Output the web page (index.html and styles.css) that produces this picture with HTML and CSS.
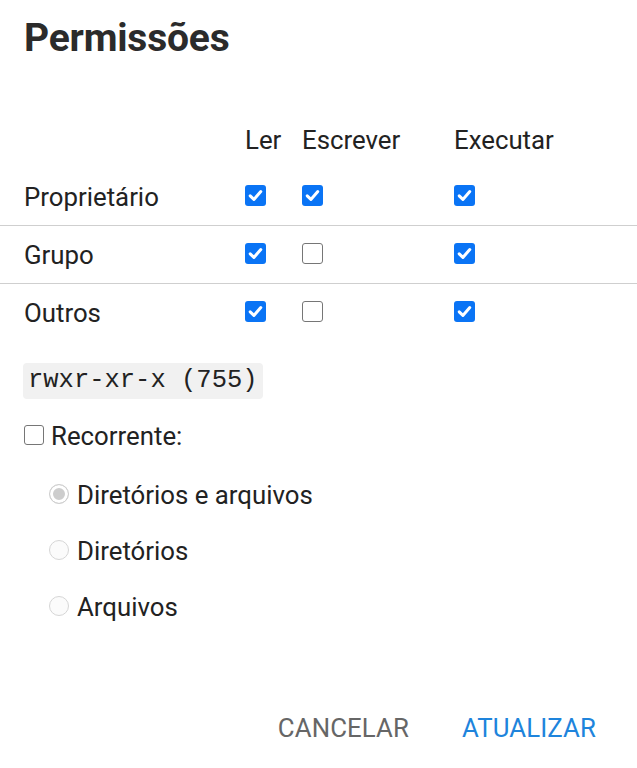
FILE: index.html
```html
<!DOCTYPE html>
<html lang="pt">
<head>
<meta charset="utf-8">
<title>Permissões</title>
<link rel="stylesheet" href="styles.css">
</head>
<body>
<div class="dialog">
  <h1 class="title">Permissões</h1>

  <div class="perm-table">
    <div class="row head">
      <div class="cell label"></div>
      <div class="cell">Ler</div>
      <div class="cell">Escrever</div>
      <div class="cell">Executar</div>
    </div>
    <div class="row body-row">
      <div class="cell label">Proprietário</div>
      <div class="cell"><span class="cb on"><svg viewBox="0 0 21 21"><path d="M5.2 10.8 L8.9 14.4 L15.8 6.6"/></svg></span></div>
      <div class="cell"><span class="cb on"><svg viewBox="0 0 21 21"><path d="M5.2 10.8 L8.9 14.4 L15.8 6.6"/></svg></span></div>
      <div class="cell"><span class="cb on"><svg viewBox="0 0 21 21"><path d="M5.2 10.8 L8.9 14.4 L15.8 6.6"/></svg></span></div>
    </div>
    <div class="row body-row">
      <div class="cell label">Grupo</div>
      <div class="cell"><span class="cb on"><svg viewBox="0 0 21 21"><path d="M5.2 10.8 L8.9 14.4 L15.8 6.6"/></svg></span></div>
      <div class="cell"><span class="cb off"></span></div>
      <div class="cell"><span class="cb on"><svg viewBox="0 0 21 21"><path d="M5.2 10.8 L8.9 14.4 L15.8 6.6"/></svg></span></div>
    </div>
    <div class="row body-row last">
      <div class="cell label">Outros</div>
      <div class="cell"><span class="cb on"><svg viewBox="0 0 21 21"><path d="M5.2 10.8 L8.9 14.4 L15.8 6.6"/></svg></span></div>
      <div class="cell"><span class="cb off"></span></div>
      <div class="cell"><span class="cb on"><svg viewBox="0 0 21 21"><path d="M5.2 10.8 L8.9 14.4 L15.8 6.6"/></svg></span></div>
    </div>
  </div>

  <div class="section">
    <code class="mode">rwxr-xr-x (755)</code>
  </div>

  <div class="section recur">
    <span class="cb off small"></span>
    <span class="recur-label">Recorrente:</span>
  </div>

  <div class="radios">
    <div class="radio-row"><span class="radio checked"></span><span class="radio-label">Diretórios e arquivos</span></div>
    <div class="radio-row"><span class="radio"></span><span class="radio-label">Diretórios</span></div>
    <div class="radio-row"><span class="radio"></span><span class="radio-label">Arquivos</span></div>
  </div>

  <div class="actions">
    <button class="btn cancel" type="button">CANCELAR</button>
    <button class="btn primary" type="button">ATUALIZAR</button>
  </div>
</div>
</body>
</html>
```

FILE: styles.css
```css
html, body {
  margin: 0;
  padding: 0;
  background: #ffffff;
}

body {
  font-family: Roboto, "Liberation Sans", Arial, sans-serif;
  font-size: 25.8px;
  color: #222222;
}

.dialog {
  width: 637px;
}

.title {
  margin: 0;
  padding: 15px 24px 0;
  font-size: 39px;
  line-height: 46px;
  font-weight: 700;
  color: #2b2b2b;
  letter-spacing: -0.2px;
}

.perm-table {
  margin-top: 50px;
}

.row {
  display: grid;
  grid-template-columns: 221px 57px 152px 1fr;
  align-items: center;
  padding-left: 24px;
}

.row.head {
  height: 57px;
}

.row.body-row {
  height: 57px;
  border-bottom: 1px solid #cfcfcf;
}

.row.body-row.last {
  border-bottom: none;
}

.cell {
  line-height: 30px;
  display: flex;
  align-items: center;
}

.head .cell {
  padding-left: 0;
}

.cb {
  box-sizing: border-box;
  display: inline-block;
  width: 21px;
  height: 21px;
  border-radius: 3px;
  margin-top: -3px;
}

.cb.on {
  background: #0a74f5;
}

.cb svg {
  display: block;
  width: 21px;
  height: 21px;
}

.cb svg path {
  fill: none;
  stroke: #ffffff;
  stroke-width: 3;
  stroke-linecap: round;
  stroke-linejoin: round;
}

.cb.off {
  border: 1.5px solid #767676;
  background: #ffffff;
}

.section {
  padding: 0 24px;
}

.mode {
  display: inline-block;
  margin-top: 22px;
  margin-left: -1px;
  padding: 1px 5px;
  font-family: "Liberation Mono", "Courier New", monospace;
  font-size: 25.5px;
  line-height: 34px;
  color: #222222;
  background: #f1f1f1;
  border-radius: 4px;
}

.recur {
  display: flex;
  align-items: center;
  margin-top: 20px;
  height: 34px;
}

.cb.small {
  width: 20px;
  height: 20px;
  margin-top: -2px;
}

.recur-label {
  margin-left: 7px;
  line-height: 30px;
}

.radios {
  padding: 0 0 0 49px;
  margin-top: 14px;
}

.radio-row {
  display: flex;
  align-items: center;
  height: 56px;
}

.radio {
  box-sizing: border-box;
  display: inline-block;
  width: 20px;
  height: 20px;
  border-radius: 50%;
  border: 1px solid #d6d6d6;
  background: #fbfbfb;
  margin-top: -2px;
}

.radio.checked {
  border-color: #cfcfcf;
  background: #cdcdcd;
  box-shadow: inset 0 0 0 3px #ffffff;
}

.radio-label {
  margin-left: 8px;
  line-height: 30px;
}

.actions {
  display: flex;
  justify-content: flex-end;
  gap: 53px;
  padding-right: 41px;
  margin-top: 78px;
}

.btn {
  border: none;
  background: none;
  padding: 0;
  font-family: Roboto, "Liberation Sans", Arial, sans-serif;
  font-size: 25.8px;
  line-height: 30px;
  letter-spacing: 0.1px;
  cursor: pointer;
}

.btn.cancel {
  color: #666666;
}

.btn.primary {
  color: #1e84dc;
}
```
